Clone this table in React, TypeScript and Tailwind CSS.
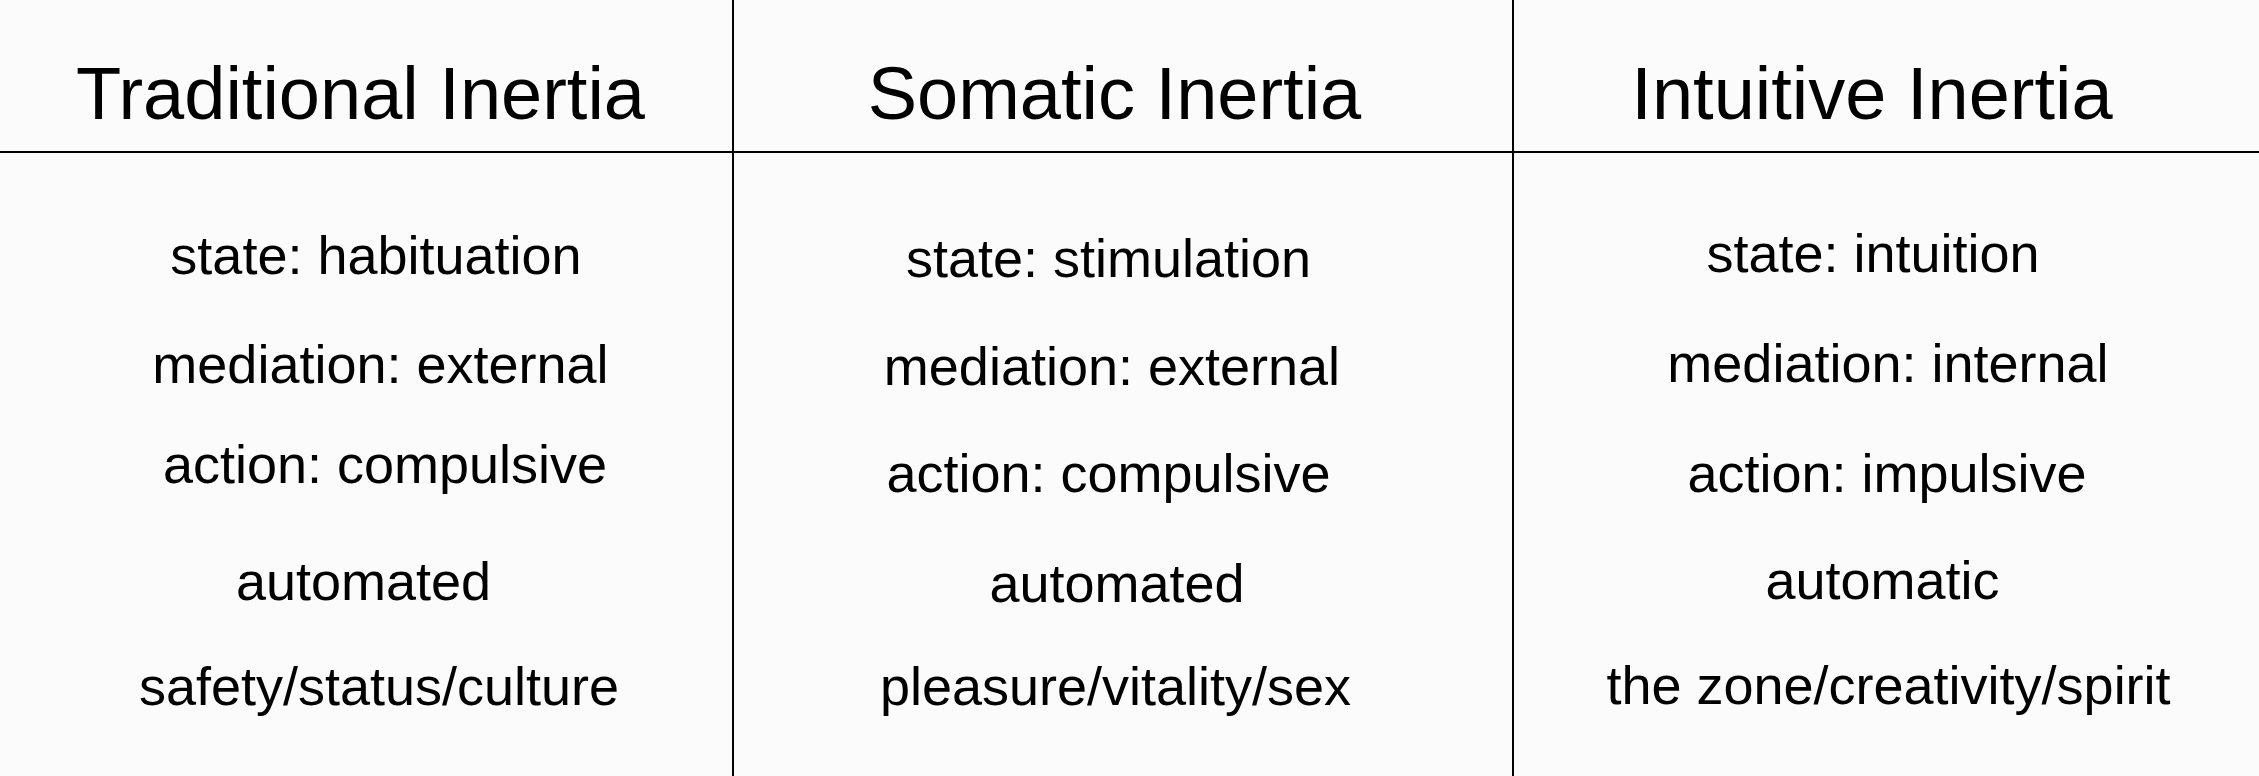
const columns = [
  {
    title: "Traditional Inertia",
    width: "w-[734px] border-r-2",
    titleClass: "pr-[11px]",
    rows: [
      { text: "state: habituation", className: "mt-[75px] pl-[20px]" },
      { text: "mediation: external", className: "mt-[55px] pl-[29px]" },
      { text: "action: compulsive", className: "mt-[46px] pl-[38px]" },
      { text: "automated", className: "mt-[63px] pr-[5px]" },
      { text: "safety/status/culture", className: "mt-[51px] pl-[26px]" },
    ],
  },
  {
    title: "Somatic Inertia",
    width: "w-[780px] border-r-2",
    titleClass: "pr-[17px]",
    rows: [
      { text: "state: stimulation", className: "mt-[78px] pr-[29px]" },
      { text: "mediation: external", className: "mt-[54px] pr-[22px]" },
      { text: "action: compulsive", className: "mt-[53px] pr-[29px]" },
      { text: "automated", className: "mt-[56px] pr-[12px]" },
      { text: "pleasure/vitality/sex", className: "mt-[49px] pr-[15px]" },
    ],
  },
  {
    title: "Intuitive Inertia",
    width: "flex-1",
    titleClass: "pr-[29px]",
    rows: [
      { text: "state: intuition", className: "mt-[73px] pr-[27px]" },
      { text: "mediation: internal", className: "mt-[56px] pl-[3px]" },
      { text: "action: impulsive", className: "mt-[56px] pl-[1px]" },
      { text: "automatic", className: "mt-[53px] pr-[8px]" },
      { text: "the zone/creativity/spirit", className: "mt-[51px] pl-[4px]" },
    ],
  },
];

export default function App() {
  return (
    <div className="flex h-[776px] w-full bg-[#fbfbfb] font-['Liberation_Sans',Arial,sans-serif] text-black">
      {columns.map((col) => (
        <div key={col.title} className={`flex flex-col border-black ${col.width}`}>
          {/* header cell */}
          <div className="flex h-[153px] justify-center border-b-2 border-black pt-[57px]">
            <h1 className={`whitespace-nowrap text-[74px] leading-none ${col.titleClass}`}>
              {col.title}
            </h1>
          </div>

          {/* body lines */}
          <div className="flex flex-col items-center">
            {col.rows.map((row) => (
              <p
                key={row.text}
                className={`whitespace-nowrap text-[54px] leading-none ${row.className}`}
              >
                {row.text}
              </p>
            ))}
          </div>
        </div>
      ))}
    </div>
  );
}
